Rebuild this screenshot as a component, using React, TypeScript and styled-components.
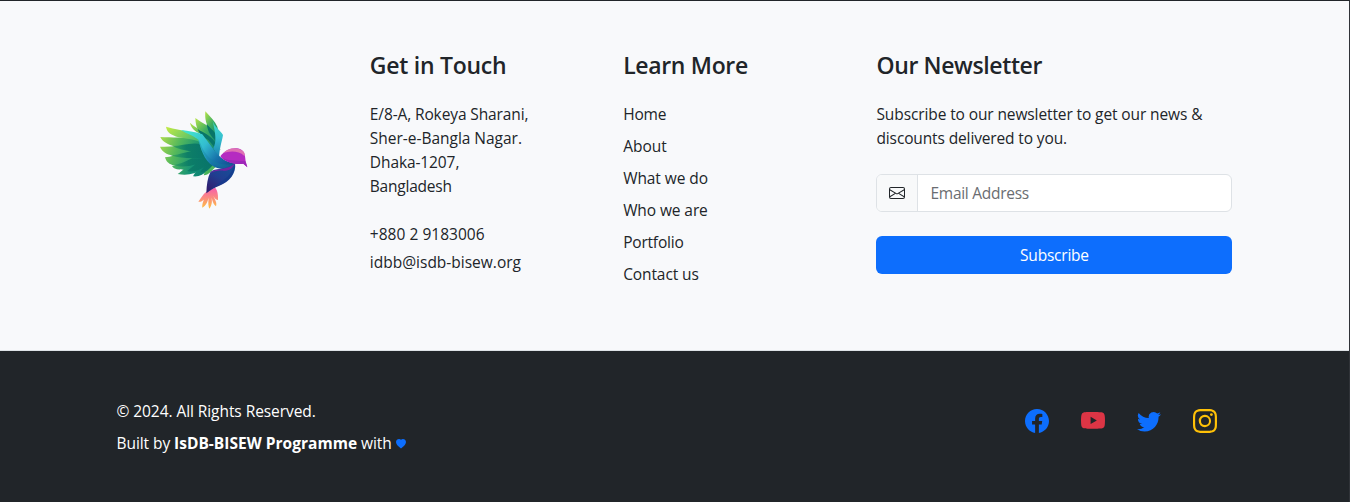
import React from "react";
import styled, { createGlobalStyle } from "styled-components";
import { BsEnvelope, BsFacebook, BsHeartFill, BsInstagram, BsTwitter, BsYoutube } from "react-icons/bs";

const GlobalStyle = createGlobalStyle`
  *, *::before, *::after { box-sizing: border-box; }
  body {
    margin: 0;
    background: #212529;
    color: #212529;
    font-family: "Open Sans", "Noto Sans", sans-serif;
    font-size: 15.5px;
    line-height: 24px;
    overflow: hidden;
  }
`;

const Footer = styled.footer`
  height: 502px;
  border-top: 1px solid #212529;
  border-right: 1px solid #303338;
`;

const Upper = styled.section`
  height: 350px;
  padding-top: 48px;
  background: #f8f9fb;
  border-bottom: 1px solid #dee2e6;
`;

const Container = styled.div`
  width: 1140px;
  margin: 0 auto;
  display: flex;
`;

const Column = styled.div<{ $wide?: boolean }>`
  width: ${(p) => (p.$wide ? "380px" : "253.33px")};
  padding: 0 12px;
`;

const LogoLink = styled.a`
  display: block;
  width: 110px;
  height: 120px;
  margin: 51px 0 0 33.5px;
`;

const Heading = styled.h4<{ $spacing?: number }>`
  margin: 2px 0 22px;
  font-size: 23px;
  font-weight: 600;
  line-height: 29px;
  letter-spacing: ${(p) => p.$spacing ?? 0}px;
  white-space: nowrap;
`;

const Line = styled.span<{ $spacing?: number }>`
  display: block;
  font-weight: 380;
  letter-spacing: ${(p) => p.$spacing ?? 0}px;
  white-space: nowrap;
`;

const Address = styled.address`
  margin: 0 0 24px;
  font-style: normal;
`;

const Contact = styled.p`
  margin: 0 0 4px;
`;

const Links = styled.nav`
  display: flex;
  flex-direction: column;
  gap: 8px;
`;

const TextLink = styled.a`
  color: inherit;
  text-decoration: none;
`;

const Blurb = styled.p`
  margin: 0 0 24px;
`;

const InputGroup = styled.div`
  display: flex;
  height: 38px;
  margin-bottom: 24px;
  border: 1px solid #dee2e6;
  border-radius: 6px;
  overflow: hidden;
  background: #fff;
`;

const InputIcon = styled.span`
  display: flex;
  align-items: center;
  padding: 0 12px;
  background: #f8f9fa;
  border-right: 1px solid #dee2e6;
  font-size: 16px;
`;

const EmailInput = styled.input`
  flex: 1;
  min-width: 0;
  padding: 0 12px;
  border: 0;
  outline: 0;
  background: transparent;
  font: inherit;
  letter-spacing: -0.28px;
  &::placeholder { color: #6a6d71; opacity: 1; }
`;

const SubscribeButton = styled.button`
  display: block;
  width: 100%;
  height: 38px;
  padding: 0;
  border: 0;
  border-radius: 6px;
  background: #0d6efd;
  color: #fff;
  font: inherit;
  letter-spacing: -0.22px;
`;

const Lower = styled.section`
  padding-top: 48px;
  color: #fff;
`;

const Credits = styled.div`
  flex: 1;
  display: flex;
  flex-direction: column;
  gap: 8px;
  padding-left: 12px;
`;

const Programme = styled.b`
  letter-spacing: 0.02px;
`;

const Heart = styled(BsHeartFill)`
  width: 10px;
  height: 10px;
  margin-left: 4.5px;
  color: #0d6efd;
`;

const Socials = styled.div`
  display: flex;
  gap: 32px;
  padding: 10px 28px 0 0;
`;

const Social = styled.a<{ $color: string }>`
  display: flex;
  width: 24px;
  height: 24px;
  font-size: 24px;
  color: ${(p) => p.$color};
`;

const BirdLogo = () => (
  <svg width="110" height="120" viewBox="0 0 330 360" aria-label="Bird logo">
    <defs>
      <linearGradient id="feather" gradientUnits="userSpaceOnUse" x1="35" y1="110" x2="205" y2="180">
        <stop offset="0" stopColor="#a8d94e" />
        <stop offset=".3" stopColor="#55b95b" />
        <stop offset=".65" stopColor="#159276" />
        <stop offset="1" stopColor="#08766f" />
      </linearGradient>
      <linearGradient id="shade" gradientUnits="userSpaceOnUse" x1="60" y1="170" x2="190" y2="150">
        <stop offset="0" stopColor="#17905f" stopOpacity=".35" />
        <stop offset=".4" stopColor="#0b7b66" stopOpacity=".9" />
        <stop offset="1" stopColor="#08736b" />
      </linearGradient>
      <linearGradient id="rear" x1="0" y1="0" x2=".7" y2="1">
        <stop offset="0" stopColor="#b9e548" />
        <stop offset=".45" stopColor="#3fae62" />
        <stop offset="1" stopColor="#0b8174" />
      </linearGradient>
      <linearGradient id="tip" x1="0" y1="0" x2="1" y2=".5">
        <stop offset="0" stopColor="#c5eb43" />
        <stop offset="1" stopColor="#48bb70" />
      </linearGradient>
      <linearGradient id="arm" gradientUnits="userSpaceOnUse" x1="115" y1="95" x2="240" y2="205">
        <stop offset="0" stopColor="#42e2cd" />
        <stop offset=".38" stopColor="#33bdd0" />
        <stop offset=".7" stopColor="#1773aa" />
        <stop offset="1" stopColor="#124a91" />
      </linearGradient>
      <linearGradient id="backArm" x1="0" y1="0" x2="0" y2="1">
        <stop offset="0" stopColor="#42dfca" />
        <stop offset=".45" stopColor="#36bfd0" />
        <stop offset="1" stopColor="#147aaa" />
      </linearGradient>
      <linearGradient id="body" x1=".8" y1="0" x2=".2" y2="1">
        <stop offset="0" stopColor="#145098" />
        <stop offset=".5" stopColor="#203e91" />
        <stop offset="1" stopColor="#321b6d" />
      </linearGradient>
      <linearGradient id="tail" x1="0" y1="0" x2="0" y2="1">
        <stop offset="0" stopColor="#f75bad" />
        <stop offset=".5" stopColor="#fb8d7e" />
        <stop offset="1" stopColor="#ffc23c" />
      </linearGradient>
    </defs>
    <path fill="url(#rear)" d="M166 34C181 51 195 64 202 80L212 128 184 94C168 76 164 57 166 34Z" />
    <path fill="url(#rear)" d="M136 54C158 72 187 78 202 107L208 147 177 119C148 105 137 86 136 54Z" />
    <path fill="url(#rear)" d="M120 68C139 89 170 91 190 116L208 171 172 137 151 101C133 94 123 83 120 68Z" />
    <path fill="#087568" d="M170 71C181 88 198 91 206 121L211 151 194 119C177 101 173 90 170 71ZM143 87C160 99 178 102 195 126L206 156 175 120C155 110 149 102 143 87Z" />
    <path fill="url(#backArm)" d="M188 63C194 82 211 91 219 105C216 125 208 143 207 177L190 145C200 126 197 101 188 63Z" />
    <path fill="#0d8074" d="M110 114L155 115 208 182 160 205 105 185 85 155Z" />
    <path fill="url(#feather)" d="M31 111C63 113 106 111 154 119L202 178C153 151 105 155 67 137 48 131 36 123 31 111Z" />
    <path fill="url(#feather)" d="M30 140C70 142 107 134 153 142L198 178C145 164 96 180 61 165 44 160 35 152 30 140Z" />
    <path fill="url(#feather)" d="M45 172C83 169 102 149 155 151L201 177C144 175 107 206 67 195 54 191 48 183 45 172Z" />
    <path fill="url(#feather)" d="M66 198C98 193 121 161 162 159L202 177C153 185 126 218 93 208 79 209 70 205 66 198Z" />
    <path fill="url(#feather)" d="M83 222C109 207 128 171 177 169L204 183C166 196 138 234 83 222Z" />
    <path fill="url(#feather)" d="M129 229C142 205 161 185 185 179L205 189C178 200 165 233 129 229Z" />
    <path fill="#49b45b" d="M161 226C167 208 181 188 203 184L200 199C185 211 177 226 161 226Z" />
    <path fill="url(#shade)" d="M66 138C96 138 120 126 153 132L197 170C141 152 104 157 66 138ZM62 166C98 165 121 147 157 153L200 178C147 171 103 180 62 166ZM72 195C108 189 134 164 163 164L197 176C145 184 117 210 72 195ZM111 213C139 193 150 174 185 177L202 181C174 185 150 223 111 213ZM151 217C160 197 177 184 203 182 178 203 172 220 151 217Z" />
    <path fill="url(#tip)" d="M48 80C75 88 99 89 122 98L158 130C129 112 92 119 68 105 55 99 50 91 48 80Z" />
    <path fill="url(#arm)" d="M93 90C116 93 140 96 157 103L187 143C210 176 226 185 257 190 250 206 215 214 190 199 161 180 152 144 145 119 130 106 112 103 93 90Z" />
    <path fill="#13829e" opacity=".35" d="M145 119C153 153 170 185 200 198 227 212 250 204 257 190 214 202 176 184 157 144 152 132 149 123 145 119Z" />
    <path fill="url(#tail)" d="M169 275C158 284 152 295 145 305 155 307 164 298 168 290 158 302 156 315 157 323 169 316 173 304 176 293 174 307 175 320 178 326 187 313 186 304 185 293 188 306 192 315 198 319 202 307 194 298 190 288 195 297 200 300 204 300 205 283 202 269 195 263Z" />
    <path fill="url(#body)" d="M181 217C194 202 227 213 255 190 260 218 239 247 208 257 194 262 181 270 169 280 170 254 173 233 181 217Z" />
    <path fill="#7524a2" d="M181 219C192 203 227 213 254 191 246 208 236 212 220 212 200 211 192 215 181 219Z" />
    <path fill="#123b8c" opacity=".7" d="M254 192C257 221 233 247 207 256 193 260 181 269 169 280 204 242 237 246 254 192Z" />
    <path fill="#b52bc1" d="M211 169C226 148 254 139 274 149 285 155 286 174 287 184L292 202 280 191C259 195 224 187 211 169Z" />
    <path fill="#df71b3" d="M219 160C233 143 262 139 280 154 285 160 285 164 283 168 265 151 238 153 219 160Z" />
    <path fill="#9d27b8" d="M211 170C230 184 262 180 286 184L292 202 280 191C255 195 225 186 211 170Z" />
  </svg>
);

const links: [string, number][] = [
  ["Home", -0.2],
  ["About", 0],
  ["What we do", -0.08],
  ["Who we are", -0.1],
  ["Portfolio", -0.2],
  ["Contact us", -0.1],
];

export default function App() {
  return (
    <>
      <GlobalStyle />
      <Footer>
        <Upper>
          <Container>
            <Column><LogoLink><BirdLogo /></LogoLink></Column>
            <Column>
              <Heading $spacing={-0.27}>Get in Touch</Heading>
              <Address>
                <Line $spacing={-0.12}>E/8-A, Rokeya Sharani,</Line>
                <Line $spacing={-0.02}>Sher-e-Bangla Nagar.</Line>
                <Line $spacing={-0.1}>Dhaka-1207,</Line>
                <Line $spacing={-0.22}>Bangladesh</Line>
              </Address>
              <Contact><Line $spacing={0.03}>+880 2 9183006</Line></Contact>
              <Contact><Line>idbb@isdb-bisew.org</Line></Contact>
            </Column>
            <Column>
              <Heading $spacing={-0.33}>Learn More</Heading>
              <Links>
                {links.map(([label, spacing]) => (
                  <TextLink key={label}><Line $spacing={spacing}>{label}</Line></TextLink>
                ))}
              </Links>
            </Column>
            <Column $wide>
              <Heading $spacing={-0.38}>Our Newsletter</Heading>
              <Blurb>
                <Line $spacing={-0.11}>Subscribe to our newsletter to get our news &amp;</Line>
                <Line $spacing={-0.13}>discounts delivered to you.</Line>
              </Blurb>
              <InputGroup>
                <InputIcon><BsEnvelope /></InputIcon>
                <EmailInput placeholder="Email Address" />
              </InputGroup>
              <SubscribeButton>Subscribe</SubscribeButton>
            </Column>
          </Container>
        </Upper>
        <Lower>
          <Container>
            <Credits>
              <Line $spacing={-0.07}>© 2024. All Rights Reserved.</Line>
              <Line $spacing={-0.07}>Built by <Programme>IsDB-BISEW Programme</Programme> with<Heart /></Line>
            </Credits>
            <Socials>
              <Social $color="#0d6efd"><BsFacebook /></Social>
              <Social $color="#dc3545"><BsYoutube /></Social>
              <Social $color="#0d6efd"><BsTwitter /></Social>
              <Social $color="#ffc107"><BsInstagram /></Social>
            </Socials>
          </Container>
        </Lower>
      </Footer>
    </>
  );
}
